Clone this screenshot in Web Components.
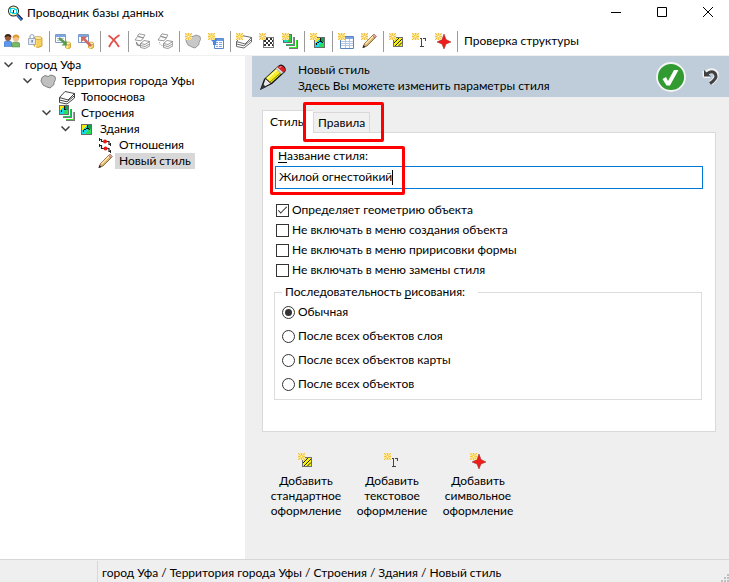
<!DOCTYPE html>
<html lang="ru">
<head>
<meta charset="utf-8">
<title>Проводник базы данных</title>
<style>
  body { margin: 0; font: 12px/16px Lato, "Noto Sans", sans-serif; color: #000; background: #efefef; }
</style>
</head>
<body>
<app-window>
  <title-bar slot="title">Проводник базы данных</title-bar>
  <tool-bar slot="tools">
    <tool-group>
      <tool-button icon="users" label="Пользователи"></tool-button>
      <tool-button icon="dblock" label="Доступ"></tool-button>
    </tool-group>
    <tool-group>
      <tool-button icon="import" label="Импорт"></tool-button>
      <tool-button icon="export" label="Экспорт"></tool-button>
    </tool-group>
    <tool-group>
      <tool-button icon="delete" label="Удалить"></tool-button>
    </tool-group>
    <tool-group>
      <tool-button icon="copy" label="Копировать"></tool-button>
      <tool-button icon="paste" label="Вставить"></tool-button>
    </tool-group>
    <tool-group>
      <tool-button icon="newmap" label="Новая территория"></tool-button>
      <tool-button icon="newquery" label="Новый запрос"></tool-button>
    </tool-group>
    <tool-group>
      <tool-button icon="newlayer" label="Новый слой"></tool-button>
      <tool-button icon="newraster" label="Новый растр"></tool-button>
      <tool-button icon="newset" label="Новый набор"></tool-button>
    </tool-group>
    <tool-group>
      <tool-button icon="newobject" label="Новый объект"></tool-button>
    </tool-group>
    <tool-group>
      <tool-button icon="newtable" label="Новая таблица"></tool-button>
      <tool-button icon="newstyle" label="Новый стиль"></tool-button>
    </tool-group>
    <tool-group>
      <tool-button icon="addfill" label="Стандартное оформление"></tool-button>
      <tool-button icon="addtext" label="Текстовое оформление"></tool-button>
      <tool-button icon="addsymbol" label="Символьное оформление"></tool-button>
    </tool-group>
    <tool-button wide label="Проверка структуры">Проверка структуры</tool-button>
  </tool-bar>
  <tree-view slot="tree">
    <tree-item level="0" open>город Уфа</tree-item>
    <tree-item level="1" open icon="region">Территория города Уфы</tree-item>
    <tree-item level="2" icon="layer">Топооснова</tree-item>
    <tree-item level="2" open icon="set">Строения</tree-item>
    <tree-item level="3" open icon="object">Здания</tree-item>
    <tree-item level="4" icon="relation">Отношения</tree-item>
    <tree-item level="4" icon="pencil" selected>Новый стиль</tree-item>
  </tree-view>
  <page-header slot="content">
    <span slot="title">Новый стиль</span>
    <span slot="hint">Здесь Вы можете изменить параметры стиля</span>
  </page-header>
  <style-tabs slot="content">
    <style-form></style-form>
  </style-tabs>
  <action-list slot="content">
    <action-button icon="addfill">Добавить стандартное оформление</action-button>
    <action-button icon="addtext">Добавить текстовое оформление</action-button>
    <action-button icon="addsymbol">Добавить символьное оформление</action-button>
  </action-list>
  <status-bar slot="status">город Уфа / Территория города Уфы / Строения / Здания / Новый стиль</status-bar>
</app-window>

<script>
// Shared pieces of the 16×16 icons
const spark = '<g shape-rendering="crispEdges"><path fill="#fbe7a2" d="M0 0h7v7H0z"/><path fill="#efc04a" d="M0 0h1v1H0zM3 0h1v2H3zM6 0h1v1H6zM1 1h1v1H1zM5 1h1v1H5zM0 3h2v1H0zM5 3h2v1H5zM1 5h1v1H1zM5 5h1v1H5zM3 5h1v2H3zM0 6h1v1H0zM6 6h1v1H6z"/><path fill="#fad85c" d="M2 2h3v3H2z"/><path fill="#fffbe0" d="M3 3h1v1H3z"/></g>';
const stack = (ink) => `<g fill="#fff" stroke="${ink}" stroke-width=".9"><path d="M.5 9v4.500L8 15l7.500-6V4.500z"/><path fill="none" d="M.5 11L8 12.800 15.500 6.700M.5 12.500"/><path d="M.5 8.500L6 2.500l9.500 2L9 11z"/></g>`;
const cylinder = (x, y, w, h) => `<path fill="#f7d05c" stroke="#c8962c" stroke-width=".8" d="M${x} ${y}v${h}q${w / 2} 3 ${w} 0v-${h}z"/><path stroke="#fff0a8" stroke-width="1.400" d="M${x + 1.6} ${y + 1}v${h}"/><ellipse cx="${x + w / 2}" cy="${y}" rx="${w / 2}" ry="1.500" fill="#fdeea0" stroke="#c89428" stroke-width=".7"/>`;
const pencil = '<path fill="#dcae6c" stroke="#6a4a26" stroke-width=".7" d="M2 14.500l1.500-4L12 2l2.500 2.500L6 13z"/><path stroke="#fff0b0" stroke-width="1.300" d="M4.500 11l8-8"/><path fill="#e8a29c" stroke="#8a5a50" stroke-width=".6" d="M11.500 2.500L13 1l2.500 2.500L14 5z"/><path fill="#222" d="M1.500 15l1-3 2 2z"/>';
const tile = '<path fill="#6c6c6c" d="M0 0h11v11H0z"/><path fill="#17d9e8" d="M1 1h9v9H1z"/><path fill="#f5ea10" d="M1 1h5L1 6z"/><path fill="#13a04a" d="M6 1h4v4L7 6z"/><path fill="#26e05c" d="M6 7l4-2v5H5z"/><path fill="#111" d="M6 1h1v3H6zM5 4h3v1H5zM3 5h2v1H3zM2 6h1v2H2zM8 5h1v1H8z"/>';
const tiles = '<g shape-rendering="crispEdges"><path fill="#777" d="M15 7h1v9H7v-1h8z"/><path fill="#35e62a" d="M13 7h2v8H7v-2h6z"/><path fill="#777" d="M12 4h1v9H4v-1h8z"/><path fill="#fff" d="M13 5h1v9H5v-1h8z"/><path fill="#12cf5a" d="M11 4h1v8H4v-1h7z"/><path fill="#fff" d="M10 2h1v9H2v-1h8z"/></g>';
const table = '<path fill="#fff" stroke="#5a84c0" d="M2.500 3.500h13v12h-13z"/><path fill="#7ba6e4" d="M3 4h12v2H3z"/><path stroke="#b4c8e6" d="M3 8.500h12M3 10.500h12M3 12.500h12M7.500 6v9M11.500 6v9"/>';
const sheets = '<g fill="#fff" stroke="#8e8e8e" stroke-width=".9"><path d="M3.500 3L5 .8l6 1.200-2 3zM1 7l2.500-3.500 6 1.300-2.500 3zM6.500 10.500v4L11 15.500l4.800-2.500V8.500z"/><path fill="none" d="M6.500 12.500l4.500 1 4.800-2.500"/><path d="M6.500 10.500L10 7.500l5.800 1-4.800 3z"/></g>';
const blob = '<path d="M2 4.500l3-2 3 1 3-1.500 4 1.500.5 3-1.500 3v2l-4 3.500-3-1-4-2-2-4z"/>';
const icons = {
  app: '<circle cx="6.500" cy="6" r="5.500" fill="#222"/><circle cx="6.500" cy="6" r="4.600" fill="#f2f8b8"/><path fill="#16d0dc" d="M3 3h5v1h2v5H5V8H3z"/><path fill="#fff" d="M4 4h3v1h2v3H6V7H4z"/><path fill="#222" d="M6 5h1v3H6z"/><path stroke="#141440" stroke-width="3" d="M10.500 10l4.500 5"/><path stroke="#2f8cf0" stroke-width="1.300" d="M10 10l4.500 5"/>',
  users: '<circle cx="4" cy="5" r="3" fill="#9a5a38"/><path fill="#3c2418" d="M.5 4.500Q.5 1 4 1t3.500 3.500L4 3z"/><path fill="#5b98ec" stroke="#3468b8" stroke-width=".5" d="M0 13.500V10q0-2 3-2h2q3 0 3 3v2.500z"/><circle cx="12" cy="5.500" r="3" fill="#f4bf88"/><path fill="#dc9a2c" d="M8.500 5.500q0-4 3.500-4t3.500 4L12 3.500z"/><path fill="#7ab864" stroke="#4b8840" stroke-width=".5" d="M8 14v-3q0-2 3-2h2q3 0 3 3v2z"/>',
  dblock: cylinder(7, 5, 8, 8) + '<path fill="#e6ebf4" stroke="#8b9ab4" stroke-width=".8" d="M1.500 5.500h7v6h-7z"/><path fill="none" stroke="#9aa8bf" stroke-width="1.200" d="M3 5V3q2-3 4 0v2"/><path fill="#5068a0" d="M4.500 7h1.200v2.500H4.500z"/>',
  import: '<path fill="#fff" stroke="#7c9cc8" d="M.5 1.500h10v8H.5z"/><path fill="#7ba8e4" d="M1 2h9v2H1z"/><path stroke="#b0c4e0" d="M2 5.500h7M2 7.500h7"/>' + cylinder(10.5, 10.5, 5, 4) + '<path stroke="#5a9a48" stroke-width="2.400" d="M4 5l6 5"/><path fill="#5a9a48" d="M12 12.500H6.500l5-5z"/>',
  export: '<path fill="#fff" stroke="#7c9cc8" d="M.5 1.500h10v8H.5z"/><path fill="#7ba8e4" d="M1 2h9v2H1z"/>' + cylinder(10.5, 10.5, 5, 4) + '<path stroke="#d06a62" stroke-width="2.600" d="M13 13L6 6"/><path fill="#d06a62" d="M3 3.500h6.500L3 9.500z"/>',
  delete: '<path fill="none" stroke="#e2504a" stroke-width="1.800" d="M2.500 2.500q6 4 10.500 11.500M13.500 2Q7 6 3 14"/>',
  copy: sheets + '<path fill="none" stroke="#888" stroke-width="1.400" d="M2.500 9q0 3.500 3.500 3.500"/>',
  paste: sheets + '<path fill="none" stroke="#999" stroke-dasharray="1 1" d="M2.500 9q0 3.500 3.500 3.500"/>',
  newmap: `<g fill="#c8c8c8" stroke="#989898">${blob}</g>` + spark,
  newquery: '<path fill="#fff" stroke="#5a88cc" d="M6.500 5.500h9v10h-9z"/><path fill="#6a9ce4" d="M7 6h8v2H7z"/><path stroke="#8aa8dc" d="M8 9.500h2M11 9.500h3M8 11.500h2M11 11.500h3M8 13.500h2M11 13.500h3"/><path fill="#4a8ade" d="M2 6h8l-2 3v3H5V9z"/>' + spark,
  newlayer: stack('#5a5a5a') + spark,
  newraster: '<g shape-rendering="crispEdges"><path fill="#fff" stroke="#777" d="M4.500 4.500h10v10h-10z"/><path fill="#333" d="M7 5h2v2H7zM11 5h2v2h-2zM5 7h2v2H5zM9 7h2v2H9zM13 7h1v2h-1zM7 9h2v2H7zM11 9h2v2h-2zM5 11h2v2H5zM9 11h2v2H9zM13 11h1v2h-1z"/></g>' + spark,
  newset: tiles + '<g shape-rendering="crispEdges"><path fill="#6c6c6c" d="M1 1h9v9H1z"/><path fill="#20d8c0" d="M2 2h7v7H2z"/><path fill="#28cf40" d="M6 2h3v7H6z"/></g>' + spark,
  newobject: `<g transform="translate(4 4)" shape-rendering="crispEdges">${tile}</g>` + spark,
  newtable: table + spark,
  newstyle: pencil + spark,
  addfill: '<g shape-rendering="crispEdges"><path fill="#f8f010" stroke="#707070" d="M4.500 4.500h9v9h-9z"/></g><path stroke="#222" d="M5 10l5-5M6 13l7-7M9.500 13l3.500-3.500"/>' + spark,
  addtext: '<path fill="none" stroke="#444" shape-rendering="crispEdges" d="M9.500 5v8M8 13.500h4M8 5.500h2M11 5.500h3M13.500 5v3"/>' + spark,
  addsymbol: '<path fill="#f01c1c" stroke="#8c2424" stroke-width=".5" d="M9 1l2 5.500L16 9l-5 2-2 5-2-5-5-2 5-2.500z"/>' + spark,
  region: `<g fill="#c0c0c0" stroke="#808080">${blob}</g>`,
  layer: stack('#303030'),
  set: tiles + `<g transform="scale(.91)" shape-rendering="crispEdges">${tile}</g>`,
  object: `<g transform="translate(3 3)" shape-rendering="crispEdges">${tile}</g>`,
  relation: '<g fill="none" stroke="#222" stroke-width="1.200"><path d="M2 2.500h2.500v2H12v3h2M2 8.500h2.500v3H12v3h2"/></g><path stroke="#222" d="M2.500 1v3M2.500 7v3M13.500 6v3M13.500 13v3"/><circle cx="8" cy="4.500" r="2" fill="#ee1515"/><circle cx="8.500" cy="11.500" r="2" fill="#ee1515"/>',
  pencil
};

function define(name, markup, setup) {
  const template = document.createElement('template');
  template.innerHTML = markup;
  customElements.define(name, class extends HTMLElement {
    constructor() {
      super();
      this.attachShadow({ mode: 'open' }).append(template.content.cloneNode(true));
    }
    connectedCallback() {
      if (setup) setup(this, this.shadowRoot);
    }
  });
}

function setIcon(host, root) {
  const icon = root.querySelector('ui-icon').cloneNode();
  icon.setAttribute('name', host.getAttribute('icon') || '');
  root.querySelector('ui-icon').replaceWith(icon);
}

define('ui-icon', `
  <style>:host { display: block; flex: none; width: 16px; height: 16px; } svg { display: block; width: 100%; height: 100%; }</style>
  <svg viewBox="0 0 16 16" fill="none" aria-hidden="true"></svg>`,
  (host, root) => { root.querySelector('svg').innerHTML = icons[host.getAttribute('name')] || ''; });

define('app-window', `
  <style>
    :host { display: grid; grid-template: auto auto 1fr auto / 100%; min-height: 100vh; }
    .body { display: grid; grid-template-columns: 245px minmax(0, 1fr); }
    main { display: flex; flex-direction: column; min-width: 0; }
  </style>
  <slot name="title"></slot>
  <slot name="tools"></slot>
  <div class="body"><slot name="tree"></slot><main><slot name="content"></slot></main></div>
  <slot name="status"></slot>`);

define('title-bar', `
  <style>
    :host { display: flex; align-items: center; gap: 4px; padding-left: 7px; height: 26px; background: #fff; }
    h1 { flex: 1; margin: 0; font: inherit; }
    button { display: grid; place-items: center; width: 42px; height: 26px; padding: 0; border: 0; background: none; }
    svg { display: block; width: 12px; height: 12px; fill: none; stroke: #000; }
  </style>
  <ui-icon name="app"></ui-icon>
  <h1><slot></slot></h1>
  <button aria-label="Свернуть"><svg viewBox="0 0 12 12"><path d="M1 5.500h10"/></svg></button>
  <button aria-label="Развернуть"><svg viewBox="0 0 12 12"><path d="M1.500 .5h9v9h-9z"/></svg></button>
  <button aria-label="Закрыть"><svg viewBox="0 0 12 12"><path d="M1 0l10 10M11 0L1 10"/></svg></button>`);

define('tool-bar', `
  <style>:host { display: flex; align-items: center; height: 30px; background: #fff; border-bottom: 1px solid #f0f0f0; box-sizing: border-box; padding-top: 1px; }</style>
  <slot></slot>`);

define('tool-group', `
  <style>
    :host { display: flex; align-items: center; }
    i { width: 1px; height: 21px; margin: 0 1px 0 3px; background: #9a9a9a; }
  </style>
  <slot></slot><i></i>`);

define('tool-button', `
  <style>
    :host { display: block; }
    button { display: grid; place-items: center; min-width: 23px; height: 22px; padding: 0; border: 0; background: none; font: inherit; color: inherit; white-space: nowrap; }
    :host([wide]) button { padding: 0 5px; }
    :host([wide]) ui-icon { display: none; }
  </style>
  <button><ui-icon></ui-icon><slot></slot></button>`,
  (host, root) => {
    setIcon(host, root);
    root.querySelector('button').setAttribute('aria-label', host.getAttribute('label'));
  });

define('tree-view', `
  <style>:host { display: block; background: #fff; padding-top: 1px; }</style>
  <div role="tree"><slot></slot></div>`);

define('tree-item', `
  <style>
    :host { display: flex; align-items: center; height: 16px; padding-left: calc(var(--level) * 19px); white-space: nowrap; }
    button { display: grid; place-items: center; flex: none; width: 17px; height: 16px; padding: 0; border: 0; background: none; }
    svg { width: 9px; height: 6px; fill: none; stroke: #404040; stroke-width: 1.500; }
    ui-icon { margin: 0 2px 0 4px; }
    span { padding: 0 4px; }
    :host([selected]) span { background: #d8d8d8; }
    :host(:not([open])) svg { display: none; }
    :host(:not([icon])) ui-icon { display: none; }
    :host(:not([icon])) button { margin-right: 4px; }
  </style>
  <button aria-label="Свернуть ветвь"><svg viewBox="0 0 9 6"><path d="M.5 .5l4 4 4-4"/></svg></button><ui-icon></ui-icon><span><slot></slot></span>`,
  (host, root) => {
    host.style.setProperty('--level', host.getAttribute('level'));
    setIcon(host, root);
  });

define('page-header', `
  <style>
    :host { display: flex; align-items: center; height: 41px; margin-left: 7px; padding: 0 9px 0 8px; background: #bfcddb; }
    .art { flex: none; width: 26px; height: 26px; }
    .text { flex: 1; min-width: 0; margin-left: 12px; padding-top: 2px; }
    .text div { line-height: 16px; }
    button { display: block; padding: 0; border: 0; background: none; }
    button + button { margin-left: 16px; }
    svg { display: block; }
  </style>
  <svg class="art" viewBox="0 0 26 26" fill="none" aria-hidden="true">
    <path fill="#111" d="M0 26l4-11L18 2q3-3 6 0t1 6L12 20z"/>
    <path fill="#f4ee20" d="M6 14L17 4l5 5-11 10z"/>
    <path stroke="#fffbb0" stroke-width="1.500" d="M7 15L18 5"/>
    <path stroke="#8c8600" d="M10 18L21 8.500"/>
    <path fill="#d8dce4" stroke="#888" stroke-width=".6" d="M16 4.500l2-2 5.500 5.500-2 2z"/>
    <path fill="#e02020" d="M18.500 2.500q2.500-1.500 5 .5t1 4.500l-1 1L17.500 3.500z"/>
    <path stroke="#ffb0b0" d="M19.500 3.500l2-1"/>
    <path fill="#e8e8e8" d="M5.500 15l5 4.500-6 3-1-2z"/>
    <path fill="#333" d="M0 26l3-6 3 3z"/>
  </svg>
  <div class="text"><div><slot name="title"></slot></div><div><slot name="hint"></slot></div></div>
  <button aria-label="Применить"><svg width="30" height="30" viewBox="0 0 30 30"><circle cx="15" cy="15" r="14" fill="#319b31" stroke="#f4f4f4" stroke-width="1.800"/><path fill="#fff" d="M6.500 17l3.500-2 2 4 6-11h4.500L14 23.500h-3.500z"/></svg></button>
  <button aria-label="Отменить"><svg width="18" height="18" viewBox="0 0 18 18" fill="none"><g stroke="#f2f2f2" stroke-width="5" stroke-linejoin="round"><path d="M4 6q3-4 7-3t3 6q-1 3-5 6"/><path d="M3 3v4.500h5"/></g><path stroke="#404040" stroke-width="3" d="M5 6q3-3 6-2t3 5q-1 3-6 6.500"/><path fill="#404040" d="M2 2l7 6.500H2z"/></svg></button>`);

define('style-tabs', `
  <style>
    :host { display: block; margin: 13px 13px 0 17px; }
    [role=tablist] { display: flex; align-items: flex-end; }
    button { height: 20px; margin: 0; padding: 0 4px; border: 1px solid #d9d9d9; border-bottom: 0; background: #f0f0f0; font: inherit; color: inherit; }
    [aria-selected=true] { position: relative; height: 23px; width: 51px; padding: 0 7px; margin-bottom: -1px; border-right: 0; background: #fff; text-align: left; }
    .mark { position: relative; display: flex; width: 57px; }
    .mark button { flex: 1; }
    .mark::after { content: ""; position: absolute; inset: -10px -14px -10px -10px; border: 3px solid #fe0000; border-radius: 2px; pointer-events: none; }
    .page { min-height: 300px; padding: 13px 12px 0; border: 1px solid #d9d9d9; background: #fff; box-sizing: border-box; }
  </style>
  <div role="tablist"><button role="tab" aria-selected="true">Стиль</button><div class="mark"><button role="tab">Правила</button></div></div>
  <div class="page" role="tabpanel"><slot></slot></div>`);

define('style-form', `
  <style>
    :host { display: block; }
    .field { position: relative; display: grid; grid-template-rows: 20px 23px; }
    .field > label { padding-left: 3px; line-height: 20px; }
    .field::after { content: ""; position: absolute; left: -5px; top: 0; width: 129px; height: 43px; border: 3px solid #fe0000; border-radius: 2px; pointer-events: none; }
    input { margin: 0; font: inherit; color: inherit; }
    .box { position: relative; display: grid; }
    .box input { width: 100%; box-sizing: border-box; padding: 0 3px 2px; border: 1px solid #0078d7; background: #fff; outline: 0; }
    .caret { position: absolute; left: 117px; top: 4px; width: 1px; height: 15px; background: #000; }
    u { text-underline-offset: 2px; }
    .options { display: grid; grid-auto-rows: 20px; margin: 11px 0 0 1px; }
    .options label, fieldset label { display: flex; align-items: center; gap: 3px; }
    [type=checkbox], [type=radio] { appearance: none; display: grid; place-items: center; flex: none; width: 13px; height: 13px; border: 1px solid #333; background: #fff; box-sizing: border-box; }
    [type=checkbox]:checked::before { content: ""; width: 8px; height: 3px; border: solid #333; border-width: 0 0 1px 1px; transform: translateY(-1px) rotate(-45deg); }
    [type=radio] { border-radius: 50%; }
    [type=radio]:checked::before { content: ""; width: 7px; height: 7px; border-radius: 50%; background: #333; }
    fieldset { min-width: 0; margin: 4px 1px 0 -1px; padding: 0 7px 3px; border: 1px solid #dcdcdc; }
    legend { padding: 0 13px 0 3px; line-height: 16px; }
    .radios { display: grid; grid-auto-rows: 24px; }
  </style>
  <div class="field">
    <label for="name"><u>Н</u>азвание стиля:</label>
    <div class="box"><input id="name" type="text" value="Жилой огнестойкий"><span class="caret"></span></div>
  </div>
  <div class="options">
    <label><input type="checkbox" checked>Определяет геометрию объекта</label>
    <label><input type="checkbox">Не включать в меню создания объекта</label>
    <label><input type="checkbox">Не включать в меню пририсовки формы</label>
    <label><input type="checkbox">Не включать в меню замены стиля</label>
  </div>
  <fieldset>
    <legend>Последовательность <u>р</u>исования:</legend>
    <div class="radios">
      <label><input type="radio" name="order" checked>Обычная</label>
      <label><input type="radio" name="order">После всех объектов слоя</label>
      <label><input type="radio" name="order">После всех объектов карты</label>
      <label><input type="radio" name="order">После всех объектов</label>
    </div>
  </fieldset>`);

define('action-list', `
  <style>:host { display: flex; gap: 14px; margin: 21px 0 0 25px; }</style>
  <slot></slot>`);

define('action-button', `
  <style>
    :host { display: block; width: 72px; }
    button { display: grid; justify-items: center; gap: 4px; width: 100%; padding: 0; border: 0; background: none; font: inherit; line-height: 15px; color: inherit; }
  </style>
  <button><ui-icon></ui-icon><span><slot></slot></span></button>`,
  setIcon);

define('status-bar', `
  <style>
    :host { display: flex; align-items: stretch; height: 23px; padding-top: 1px; box-sizing: border-box; border-top: 1px solid #d7d7d7; }
    .cell { width: 97px; border-right: 1px solid #d7d7d7; }
    .path { flex: 1; padding-left: 4px; line-height: 24px; }
    svg { align-self: flex-end; }
  </style>
  <div class="cell"></div><div class="path"><slot></slot></div>
  <svg width="8" height="8" viewBox="0 0 8 8" aria-hidden="true"><path fill="#bfbfbf" d="M6 0h2v2H6zM3 3h2v2H3zM6 3h2v2H6zM0 6h2v2H0zM3 6h2v2H3zM6 6h2v2H6z"/></svg>`);
</script>
</body>
</html>
